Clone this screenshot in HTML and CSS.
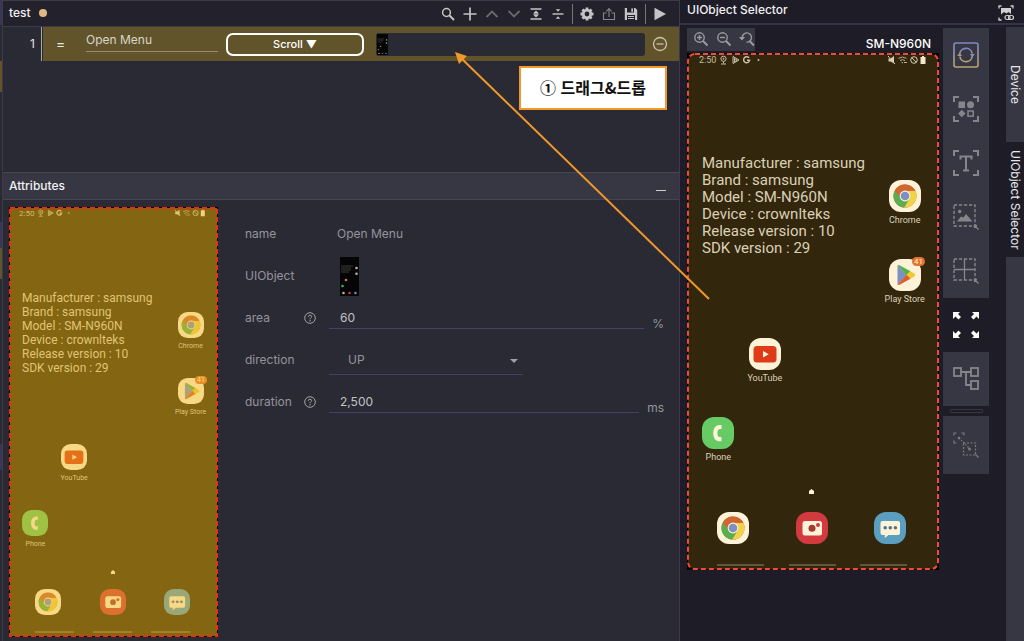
FILE: index.html
```html
<!DOCTYPE html>
<html lang="ko">
<head>
<meta charset="utf-8">
<title>UIObject Selector</title>
<link rel="stylesheet" href="styles.css">
</head>
<body>
<svg class="sprite" aria-hidden="true">
  <symbol id="chrome" viewBox="0 0 32 32">
    <rect width="32" height="32" rx="12" fill="#fff"/>
    <circle cx="16" cy="16" r="11.5" fill="#bc473c"/>
    <path d="M16 16 L5.900 10.400 A11.500 11.500 0 0 0 15.200 27.500 L21 18.800Z" fill="#30ab55"/>
    <path d="M16 10.800 H26.300 A11.500 11.500 0 0 1 15.200 27.500 L20.600 18.600Z" fill="#eed84b"/>
    <path d="M5.900 10.400 A11.500 11.500 0 0 1 26.300 10.800 H16 L11.400 18.600Z" fill="#c4502f"/>
    <circle cx="16" cy="16" r="5.400" fill="#fff"/><circle cx="16" cy="16" r="4.300" fill="#5f83e6"/>
  </symbol>
  <symbol id="play-store" viewBox="0 0 32 32">
    <rect width="32" height="32" rx="12" fill="#fff"/>
    <path d="M8.500 6.500 L17.500 16 L8.500 25.500Z" fill="#5f83e6"/>
    <path d="M8.500 6.500 Q9.500 5.500 11 6.400 L21.500 12.300 L17.500 16.200Z" fill="#30ab55"/>
    <path d="M21.300 12.200 L25.500 14.800 Q27 16 25.500 17.200 L21.300 19.800 L17.300 16Z" fill="#f2ca28"/>
    <path d="M8.500 25.500 Q9.500 26.500 11 25.600 L21.500 19.700 L17.500 15.800Z" fill="#cf472f"/>
  </symbol>
  <symbol id="youtube" viewBox="0 0 32 32">
    <rect width="32" height="32" rx="12" fill="#fff"/>
    <rect x="4.500" y="8" width="23" height="16.500" rx="3.500" fill="#d71a0f"/>
    <path d="M14 13 L19.800 16.200 L14 19.400Z" fill="#fff"/>
  </symbol>
  <symbol id="phone-app" viewBox="0 0 32 32">
    <rect width="32" height="32" rx="12" fill="#41ce70"/>
    <path d="M19.500 10 H17.300 Q13.300 10.600 13.300 16.200 Q13.300 21.600 17.300 22.200 H19.500" fill="none" stroke="#fff" stroke-width="4.200"/>
  </symbol>
  <symbol id="camera" viewBox="0 0 32 32">
    <rect width="32" height="32" rx="12" fill="#c81840"/>
    <rect x="6.500" y="9" width="19.500" height="14.500" rx="2.500" fill="#fff"/>
    <circle cx="16" cy="16.200" r="3.500" fill="#8e1a2c"/><circle cx="22" cy="13" r="2" fill="#c81840"/>
  </symbol>
  <symbol id="messages" viewBox="0 0 32 32">
    <rect width="32" height="32" rx="12" fill="#3395e1"/>
    <path d="M8.500 9 H24 Q26 9 26 11 V21 Q26 23 24 23 H14.500 L10.800 26 V23 H8.500 Q6.500 23 6.500 21 V11 Q6.500 9 8.500 9Z" fill="#fff"/>
    <circle cx="11.200" cy="15.800" r="1.800" fill="#2a5f9c"/><circle cx="16.300" cy="15.800" r="1.800" fill="#2a5f9c"/><circle cx="21.400" cy="15.800" r="1.800" fill="#2a5f9c"/>
  </symbol>
  <symbol id="status-left" viewBox="0 0 42 10">
    <g fill="none" stroke="#bdbdbd"><circle cx="4.500" cy="3.800" r="2.600"/><path d="M4.500 6.500 V8.500 M2 9 H7"/><circle cx="4.500" cy="3.800" r=".6"/>
    <path d="M14 1.500 L20 5 L14 8.500Z"/><path d="M15.500 3.500 V7 L18 5.200Z"/>
    <path d="M30 2.900 A3 3 0 1 0 30.600 5.200 H28" stroke-width="1.500"/></g>
    <circle cx="39.500" cy="5" r="1" fill="#bdbdbd"/>
  </symbol>
  <symbol id="status-right" viewBox="0 0 40 10">
    <path d="M1.500 3.500 H3.500 L7 1 V8.500 L3.500 6.500 H1.500Z" fill="#cfcfcf"/><path d="M1 1 L8 9" stroke="#cfcfcf"/>
    <g fill="none" stroke="#a9a9a9"><path d="M11.500 3.300 Q15.500 .8 19.500 3.300 M13 5.500 Q15.500 3.800 18 5.500 M14.500 7.200 L16 8 M17 7.500 H20"/>
    <circle cx="27" cy="5" r="3.300" stroke="#cfcfcf"/><path d="M24.700 2.700 L29.300 7.300" stroke="#cfcfcf"/></g>
    <path d="M33.500 2 H35 V1 H37 V2 H38.500 V9 H33.500Z" fill="#f0f0f0"/>
  </symbol>
  <symbol id="thumb" viewBox="0 0 19 39">
    <rect width="19" height="39" fill="#050505"/>
    <path d="M1 9 H13 M1 11 H11 M1 13 H11 M1 15 H9" stroke="#3c3c3c"/>
    <g fill="#b5b69a"><circle cx="16.500" cy="11" r="1.300"/><circle cx="16.500" cy="16.800" r="1.300"/><circle cx="3.500" cy="36" r="1.300"/></g>
    <circle cx="6" cy="23" r="1.300" fill="#c27a6c"/><circle cx="2.500" cy="29" r="1.300" fill="#43b256"/>
    <circle cx="9.500" cy="36" r="1.300" fill="#c23b55"/><circle cx="15.500" cy="36" r="1.300" fill="#4a98cc"/>
  </symbol>
  <symbol id="help" viewBox="0 0 12 12">
    <g fill="none" stroke="#a2a2a8"><circle cx="6" cy="6" r="5.300"/><path d="M4.300 4.800 Q4.400 3.200 6 3.200 Q7.700 3.300 7.600 4.700 Q7.500 5.500 6.600 6 Q6 6.400 6 7.300"/></g><circle cx="6" cy="8.800" r=".7" fill="#a2a2a8"/>
  </symbol>
  <symbol id="corners" viewBox="0 0 26 26">
    <path d="M1 6 V1 H6 M20 1 H25 V6 M25 20 V25 H20 M6 25 H1 V20" fill="none" stroke="#85858a" stroke-width="2"/>
  </symbol>
  <symbol id="marquee" viewBox="0 0 26 26">
    <rect x="1" y="1" width="21" height="21" fill="none" stroke="#85858a" stroke-width="1.400" stroke-dasharray="3.200 1.800"/>
    <path d="M21.500 21.500 L25.500 25.500 M21.500 24 V21.500 H24" fill="none" stroke="#85858a" stroke-width="1.300"/>
  </symbol>
</svg>

<div class="app">
  <div class="edge"></div>
  <main class="editor">
    <header class="editor-bar">
      <h1 class="tab-title">test</h1><span class="dirty"></span>
      <div class="actions">
        <button class="act" aria-label="Search"><svg viewBox="0 0 14 14"><circle cx="5.500" cy="5.500" r="3.900" fill="none" stroke="currentColor" stroke-width="1.500"/><path d="M8.500 8.500 L13 13" stroke="currentColor" stroke-width="2"/></svg></button>
        <button class="act" aria-label="Add"><svg viewBox="0 0 14 14"><path d="M7 .5 V13.500 M.5 7 H13.500" stroke="currentColor" stroke-width="1.700"/></svg></button>
        <button class="act dim" aria-label="Up"><svg viewBox="0 0 14 14"><path d="M1.500 10 L7 4.500 L12.500 10" fill="none" stroke="currentColor" stroke-width="1.800"/></svg></button>
        <button class="act dim" aria-label="Down"><svg viewBox="0 0 14 14"><path d="M1.500 4 L7 9.500 L12.500 4" fill="none" stroke="currentColor" stroke-width="1.800"/></svg></button>
        <button class="act" aria-label="Expand"><svg viewBox="0 0 14 14"><path d="M1.500 2 H12.500 M1.500 12 H12.500 M4.500 7 H9.500" stroke="currentColor" stroke-width="1.400"/><path d="M7 3.500 L9.500 6 H4.500Z M7 10.500 L9.500 8 H4.500Z" fill="currentColor"/></svg></button>
        <button class="act" aria-label="Collapse"><svg viewBox="0 0 14 14"><path d="M1.500 7 H12.500" stroke="currentColor" stroke-width="1.400"/><path d="M7 4.800 L9.300 2.200 H4.700Z M7 9.200 L9.300 11.800 H4.700Z" fill="currentColor"/></svg></button>
        <span class="sep"></span>
        <button class="act" aria-label="Settings"><svg viewBox="0 0 14 14"><circle cx="7" cy="7" r="3.800" fill="none" stroke="currentColor" stroke-width="2.800"/><path d="M7 .5 V2.500 M7 11.500 V13.500 M.5 7 H2.500 M11.500 7 H13.500 M2.400 2.400 L3.800 3.800 M10.200 10.200 L11.600 11.600 M2.400 11.600 L3.800 10.200 M10.200 3.800 L11.600 2.400" stroke="currentColor" stroke-width="2.800"/></svg></button>
        <button class="act mid" aria-label="Upload"><svg viewBox="0 0 14 14"><path d="M4.500 6 H1.500 V12.500 H12.500 V6 H9.500 M7 10 V2 M4.300 4.500 L7 1.600 L9.700 4.500" fill="none" stroke="currentColor" stroke-width="1.100"/></svg></button>
        <button class="act" aria-label="Save"><svg viewBox="0 0 14 14"><path fill-rule="evenodd" d="M.8 1 H11.200 L13.200 3 V13 H.8Z M3 1 V5.500 H10 V1Z M3 8 V13 H11 V8Z" fill="currentColor"/><path d="M7.300 1.500 H9 V4.700 H7.300Z M4 9 H10 V10 H4Z M4 11 H10 V12 H4Z" fill="currentColor"/></svg></button>
        <span class="sep"></span>
        <button class="act" aria-label="Run"><svg viewBox="0 0 14 14"><path d="M1.500 .8 L13 7 L1.500 13.200Z" fill="currentColor"/></svg></button>
      </div>
    </header>

    <section class="steps">
      <div class="step">
        <span class="line-no">1</span>
        <div class="step-body">
          <span class="grip">=</span>
          <input class="step-name" aria-label="Step name" value="Open Menu">
          <button class="kind">Scroll ▼</button>
          <div class="drop"><svg class="drop-thumb" viewBox="0 0 19 39" preserveAspectRatio="none"><use href="#thumb"/></svg></div>
          <button class="remove" aria-label="Remove"><svg viewBox="0 0 16 16"><g fill="none" stroke="#c9c3b0" stroke-width="1.300"><circle cx="8" cy="8" r="6.500"/><path d="M4.500 8 H11.500"/></g></svg></button>
        </div>
      </div>
    </section>

    <header class="attr-bar"><h2 class="attr-title">Attributes</h2><button class="minimize" aria-label="Minimize"></button></header>

    <section class="attrs">
      <div class="phone small">
        <div class="status"><span class="clock">2:50</span><svg class="st-left"><use href="#status-left"/></svg><svg class="st-right"><use href="#status-right"/></svg></div>
        <div class="home">
          <div class="info">Manufacturer : samsung<br>Brand : samsung<br>Model : SM-N960N<br>Device : crownlteks<br>Release version : 10<br>SDK version : 29</div>
          <div class="launcher r1 c5"><svg class="ico"><use href="#chrome"/></svg><span>Chrome</span></div>
          <div class="launcher r2 c5"><svg class="ico"><use href="#play-store"/></svg><span>Play Store</span><b class="badge">41</b></div>
          <div class="launcher r3 c2"><svg class="ico"><use href="#youtube"/></svg><span>YouTube</span></div>
          <div class="launcher r4 c1"><svg class="ico"><use href="#phone-app"/></svg><span>Phone</span></div>
        </div>
        <svg class="pager" viewBox="0 0 6 6"><path d="M3 0 L6 2.500 V6 H0 V2.500Z" fill="#fff"/></svg>
        <div class="dock"><svg class="ico"><use href="#chrome"/></svg><svg class="ico"><use href="#camera"/></svg><svg class="ico"><use href="#messages"/></svg></div>
        <div class="nav"><i></i><i></i><i></i></div>
        <svg class="outline"><rect/></svg>
      </div>

      <form class="form">
        <div class="field"><span class="label">name</span><span class="static">Open Menu</span></div>
        <div class="field"><span class="label">UIObject</span><svg class="obj-thumb"><use href="#thumb"/></svg></div>
        <div class="field"><label class="label" for="area">area</label><svg class="help"><use href="#help"/></svg><input class="box" id="area" value="60"><span class="unit">%</span></div>
        <div class="field"><label class="label" for="direction">direction</label><div class="pick"><select class="select" id="direction"><option>UP</option><option>DOWN</option></select></div></div>
        <div class="field"><label class="label" for="duration">duration</label><svg class="help"><use href="#help"/></svg><input class="box" id="duration" value="2,500"><span class="unit">ms</span></div>
      </form>
    </section>
  </main>

  <aside class="selector">
    <header class="sel-bar"><h2 class="sel-title">UIObject Selector</h2>
      <button class="link-btn" aria-label="Link screen"><svg viewBox="0 0 16 16"><path d="M1 3.500 V1 H3.500 M12.500 1 H15 V3.500 M1 12.500 V15 H3.500" fill="none" stroke="#cfcfcf" stroke-width="1.300"/><path d="M3 3 H13 V9 L10.500 7 L8.500 8.500 L6 7 L3 9.500Z" fill="#cfcfcf"/><rect x="7" y="10.500" width="5" height="4" rx="2" fill="none" stroke="#cfcfcf" stroke-width="1.200"/><rect x="10.500" y="10.500" width="5" height="4" rx="2" fill="none" stroke="#cfcfcf" stroke-width="1.200"/></svg></button>
    </header>
    <div class="sel-body">
      <div class="stage">
        <div class="stage-head">
          <div class="zoom">
            <button class="zoom-btn" aria-label="Zoom in"><svg viewBox="0 0 16 16"><g fill="none" stroke="#9a9aa0" stroke-width="1.400"><circle cx="6.500" cy="6.500" r="4.700"/><path d="M6.500 4 V9 M4 6.500 H9"/></g><path d="M10 10 L14.500 14.500" stroke="#9a9aa0" stroke-width="2"/></svg></button>
            <button class="zoom-btn" aria-label="Zoom out"><svg viewBox="0 0 16 16"><g fill="none" stroke="#9a9aa0" stroke-width="1.400"><circle cx="6.500" cy="6.500" r="4.700"/><path d="M4 6.500 H9"/></g><path d="M10 10 L14.500 14.500" stroke="#9a9aa0" stroke-width="2"/></svg></button>
            <button class="zoom-btn" aria-label="Reset zoom"><svg viewBox="0 0 16 16"><path d="M3.300 7 A4.600 4.600 0 1 1 7.500 11.100" fill="none" stroke="#9a9aa0" stroke-width="1.400"/><path d="M0 6 L6 6 L3 9.500Z" fill="#9a9aa0"/><path d="M10.500 10 L15 14.500" stroke="#9a9aa0" stroke-width="2"/></svg></button>
          </div>
          <span class="model">SM-N960N</span>
        </div>
        <div class="phone large">
          <div class="status"><span class="clock">2:50</span><svg class="st-left"><use href="#status-left"/></svg><svg class="st-right"><use href="#status-right"/></svg></div>
          <div class="home">
            <div class="info">Manufacturer : samsung<br>Brand : samsung<br>Model : SM-N960N<br>Device : crownlteks<br>Release version : 10<br>SDK version : 29</div>
            <div class="launcher r1 c5"><svg class="ico"><use href="#chrome"/></svg><span>Chrome</span></div>
            <div class="launcher r2 c5"><svg class="ico"><use href="#play-store"/></svg><span>Play Store</span><b class="badge">41</b></div>
            <div class="launcher r3 c2"><svg class="ico"><use href="#youtube"/></svg><span>YouTube</span></div>
            <div class="launcher r4 c1"><svg class="ico"><use href="#phone-app"/></svg><span>Phone</span></div>
          </div>
          <svg class="pager" viewBox="0 0 6 6"><path d="M3 0 L6 2.500 V6 H0 V2.500Z" fill="#fff"/></svg>
          <div class="dock"><svg class="ico"><use href="#chrome"/></svg><svg class="ico"><use href="#camera"/></svg><svg class="ico"><use href="#messages"/></svg></div>
          <div class="nav"><i></i><i></i><i></i></div>
          <svg class="outline"><rect/></svg>
        </div>
      </div>

      <div class="tools">
        <div class="tool-group">
          <button class="tool" aria-label="Refresh"><svg viewBox="0 0 26 26"><defs><linearGradient id="tone" x1="0" y1="0" x2="0" y2="1"><stop offset="0" stop-color="#8088c4"/><stop offset=".5" stop-color="#9c98a0"/><stop offset="1" stop-color="#b9a66a"/></linearGradient></defs><g fill="none" stroke="url(#tone)" stroke-width="1.600"><rect x="1" y="1" width="24" height="24" rx="2"/><path d="M6.700 12.500 A6.300 6.300 0 0 1 19.200 11.500 M19.300 13.500 A6.300 6.300 0 0 1 6.800 14.500"/></g><path d="M16.800 12 H22 L19.400 15Z" fill="#8a8cb8"/><path d="M4 14 H9.200 L6.600 11Z" fill="#a59a7c"/></svg></button>
          <button class="tool" aria-label="Objects"><svg viewBox="0 0 26 26"><use href="#corners"/><g fill="#85858a"><rect x="5.500" y="5.500" width="6.500" height="6.500"/><circle cx="17.500" cy="8.800" r="3.500"/><path d="M8.800 13.800 L12.500 17.500 L8.800 21.200 L5.100 17.500Z"/></g><rect x="15" y="15" width="5.200" height="5.200" fill="none" stroke="#85858a" stroke-width="1.500"/></svg></button>
          <button class="tool" aria-label="Text"><svg viewBox="0 0 26 26"><use href="#corners"/><path d="M7.500 9.500 V6.500 H18.500 V9.500 M13 6.500 V20.500 M10 20.500 H16" fill="none" stroke="#85858a" stroke-width="2"/></svg></button>
          <button class="tool" aria-label="Image"><svg viewBox="0 0 26 26"><use href="#marquee"/><circle cx="6.700" cy="7.500" r="1.700" fill="#85858a"/><path d="M4 17.500 L8 12.500 L10.500 13.500 L13 10 L19.500 17.500Z" fill="#85858a"/></svg></button>
          <button class="tool" aria-label="Area"><svg viewBox="0 0 26 26"><use href="#marquee"/><path d="M11.500 1 V22 M1 11.500 H22" stroke="#85858a" stroke-width="1.300"/></svg></button>
        </div>
        <button class="tool bare" aria-label="Full size"><svg viewBox="0 0 26 26"><path d="M0 0 H7 L5 2 L8 5 L5.500 7.500 L2.500 4.500 L0 7Z M26 0 V7 L23.500 4.500 L20.500 7.500 L18 5 L21 2 L19 0Z M0 26 V19 L2.500 21.500 L5.500 18.500 L8 21 L5 24 L7 26Z M26 26 H19 L21 24 L18 21 L20.500 18.500 L23.500 21.500 L26 19Z" fill="#fff"/></svg></button>
        <div class="tool-group"><button class="tool" aria-label="Tree"><svg viewBox="0 0 26 26"><g fill="none" stroke="#85858a" stroke-width="1.800"><rect x="1" y="2" width="7" height="8"/><rect x="18" y="2" width="7" height="8"/><rect x="18" y="15" width="7" height="8"/><path d="M8 6 H18 M13 6 V19 H18"/></g></svg></button></div>
        <hr class="rule">
        <div class="tool-group"><button class="tool tall" aria-label="Drag area"><svg viewBox="0 0 26 26"><g fill="none" stroke="#7a7a80" stroke-width="1.200"><path d="M1 3.500 V1 H3.500 M8.500 1 H11 V3.500 M1 8.500 V11 H3.500"/><rect x="10.500" y="11" width="12" height="12" stroke-dasharray="2 1.500"/><path d="M6 6 L16.500 16.500" stroke-dasharray="1.500 1.500"/><path d="M22.500 22.500 L25.500 25.500"/></g><circle cx="6" cy="6" r="1.300" fill="#7a7a80"/><circle cx="16.500" cy="17" r="1.500" fill="#7a7a80"/></svg></button></div>
      </div>

      <nav class="side-tabs"><button class="side-tab">Device</button><button class="side-tab active">UIObject Selector</button><div class="side-fill"></div></nav>
    </div>
  </aside>

  <svg class="arrow" viewBox="0 0 256 250"><path d="M254 247 L7 7" stroke="#f0982a" stroke-width="2"/><path d="M0 0 L12 4 L4 12Z" fill="#f0982a"/></svg>
  <div class="callout">① 드래그&amp;드롭</div>
</div>
</body>
</html>
```

FILE: styles.css
```css
* { box-sizing: border-box; }
body { margin: 0; background: #1e1c26; color: #e6e6e8; font: 12px/16px Inter, "Noto Sans CJK KR", sans-serif; }
button, input, select { font: inherit; color: inherit; background: none; border: 0; padding: 0; margin: 0; border-radius: 0; outline: 0; }
h1, h2 { margin: 0; font-size: 12px; font-weight: 500; color: #f0f0f2; }
svg { display: block; }
.sprite { position: absolute; width: 0; height: 0; }

.app { position: relative; display: flex; min-height: 100vh; }
.edge { width: 3px; border-right: 1px solid #3d3b4a; background: linear-gradient(#3b3658 0 25px, #2a2a35 25px 61px, #62542a 61px 92px, #2a2a35 92px 222px, #3b3658 222px 248px, #62542a 248px 279px, #2a2a35 279px 444px, #3b3658 444px 470px, #2a2a35 470px); }
.editor { flex: 1; min-width: 0; display: flex; flex-direction: column; background: #2a2a35; border-right: 1px solid #3d3b4a; }

.editor-bar { display: flex; align-items: center; height: 27px; padding: 0 0 1px 6px; background: #22212c; border-top: 1px solid #3d3b4a; border-bottom: 1px solid #3d3b4a; }
.dirty { width: 8px; height: 8px; margin-left: 8px; border-radius: 50%; background: #e0b884; }
.actions { display: flex; align-items: center; margin-left: auto; padding: 2px 8px 0 0; }
.act { width: 22px; padding: 0 4px; color: #c4c4c6; }
.act svg { width: 14px; height: 14px; }
.act.dim { color: #6a6970; }
.act.mid { color: #85858c; }
.sep { width: 1px; height: 20px; margin: 0 3px; background: #77767e; }

.steps { height: 145px; }
.step { display: flex; height: 34px; }
.line-no { width: 39px; padding-right: 6px; line-height: 34px; text-align: right; border-right: 1px solid #a9a9ae; }
.step-body { flex: 1; display: flex; align-items: center; margin-left: 1px; padding: 0 11px 0 13px; background: #62542a; }
.grip { width: 30px; font-size: 14px; }
.step-name { width: 132px; height: 22px; margin-bottom: 6px; padding-bottom: 2px; color: #d8d5cc; border-bottom: 1px solid #968c70; }
.kind { width: 138px; height: 23px; margin: 0 12px 0 8px; font-size: 11px; font-weight: 500; color: #fff; border: 2px solid #fff; border-radius: 7px; }
.drop { flex: 1; height: 23px; padding: 1px; background: #2a2a35; border-radius: 3px; }
.drop-thumb { width: 11px; height: 21px; }
.remove { margin-left: 7px; }
.remove svg { width: 16px; height: 16px; }

.attr-bar { display: flex; justify-content: space-between; height: 28px; padding: 5px 13px 0 6px; background: #373643; border-top: 1px solid #464453; border-bottom: 1px solid #464453; }
.minimize { width: 10px; height: 13px; border-bottom: 1px solid #d0d0d2; }
.attrs { flex: 1; display: flex; padding: 7px 15px 4px 6px; }
.form { flex: 1; margin-left: 27px; padding-top: 6px; color: #94949a; }
.field { display: flex; align-items: center; height: 42px; }
.label { width: 59px; margin-right: 25px; }
.static { padding-left: 8px; }
.obj-thumb { width: 19px; height: 39px; margin-left: 11px; }
.help { width: 12px; height: 12px; margin: 0 13px 0 -25px; }
.box { flex: 1; min-width: 0; height: 21px; padding: 0 11px; color: #c2c2c6; border-bottom: 1px solid #44406a; }
.unit { margin: 12px 0 0 8px; }
.pick { position: relative; width: 194px; }
.pick::after { content: ""; position: absolute; right: 5px; top: 13px; border: 4px solid transparent; border-top-color: #a0a0a6; border-bottom: 0; pointer-events: none; }
.select { width: 100%; height: 29px; padding-left: 19px; appearance: none; border-bottom: 1px solid #44406a; }

.phone { position: relative; display: flex; flex-direction: column; background: #000; color: #d4d4d4; font-family: Roboto, sans-serif; }
.phone.large { width: 252px; height: 517px; --icon: 32px; --row: 79px; --lift: 25px; --start: 102px; --label: 9px; --text: 15px; --lead: 17px; --pad: 30px; --bar: 47px; --gap: 18px; }
.phone.small { width: 209px; height: 430px; --icon: 26px; --row: 66px; --lift: 21px; --start: 84px; --label: 7px; --text: 12px; --lead: 14px; --pad: 26px; --bar: 39px; --gap: 15px; }
.status { display: flex; flex: none; height: var(--start); padding: 2px 12px 0 12px; font-size: 9px; line-height: 11px; color: #bdbdbd; }
.small .status { padding-left: 10px; font-size: 8px; line-height: 9px; }
.st-left { width: 42px; height: 10px; margin-left: 3px; }
.st-right { width: 40px; height: 10px; margin-left: auto; }
.small .st-left { width: 34px; height: 8px; }
.small .st-right { width: 32px; height: 8px; }
.home { flex: none; display: grid; grid-template: repeat(4, var(--row)) / repeat(5, minmax(0, 1fr)); padding: 0 11px 0 8px; }
.small .home { padding: 0 8px 0 7px; }
.info { grid-area: 1 / 1 / 3 / 5; padding-left: 7px; font-size: var(--text); line-height: var(--lead); white-space: nowrap; }
.small .info { padding-left: 6px; }
.launcher { position: relative; display: flex; flex-direction: column; align-items: center; gap: 2px; padding-top: var(--lift); font-size: var(--label); line-height: 12px; white-space: nowrap; }
.r1 { grid-row: 1; } .r2 { grid-row: 2; } .r3 { grid-row: 3; } .r4 { grid-row: 4; }
.c1 { grid-column: 1; } .c2 { grid-column: 2; } .c5 { grid-column: 5; }
.ico { width: var(--icon); height: var(--icon); flex: none; }
.badge { position: absolute; right: 3px; top: calc(var(--lift) - 2px); padding: 0 2px; font-size: 8px; font-weight: 400; line-height: 9px; border-radius: 5px; background: #e0602c; color: #fff; }
.small .badge { font-size: 7px; line-height: 8px; }
.pager { flex: none; width: 5px; height: 5px; margin: var(--gap) 0 var(--gap) 122px; }
.small .pager { width: 4px; height: 4px; margin-left: 102px; }
.dock { display: flex; justify-content: space-between; padding: 0 calc(var(--pad) + 3px) 0 var(--pad); }
.small .dock { padding-right: 28px; }
.nav { display: flex; justify-content: space-between; margin: auto calc(var(--pad) + 2px) 4px var(--pad); }
.nav i { width: var(--bar); height: 2px; background: #3c3c3c; }
.outline { position: absolute; inset: 0; width: 100%; height: 100%; }
.outline rect { x: 1px; y: 1px; width: calc(100% - 2px); height: calc(100% - 2px); fill: #fbc33c; fill-opacity: 0.2; stroke: #f4483a; stroke-width: 2; stroke-dasharray: 5 3; rx: 7px; }
.small .outline rect { fill: #eeb821; fill-opacity: 0.55; stroke: #ee2e12; rx: 0; }
.small .outline { background: #a3421499; background: none; }

.selector { flex: none; width: 344px; display: flex; flex-direction: column; }
.sel-bar { display: flex; justify-content: space-between; height: 25px; padding: 2px 10px 0 7px; border-bottom: 2px solid #35334a; }
.link-btn svg { width: 16px; height: 16px; }
.sel-body { flex: 1; display: flex; }
.stage { flex: 1; padding: 3px 4px 0 7px; }
.stage-head { display: flex; justify-content: space-between; height: 25px; padding-right: 8px; }
.zoom { display: flex; gap: 7px; height: 23px; padding: 3px 0 0 6px; background: #373643; }
.zoom-btn { width: 16px; height: 16px; }
.zoom-btn svg { width: 16px; height: 16px; }
.model { padding-top: 8px; font-weight: 500; color: #fff; }
.tools { width: 46px; padding-top: 3px; }
.tool-group { background: #373643; }
.tool { display: flex; justify-content: center; align-items: center; width: 100%; height: 54px; }
.tool.tall { height: 58px; }
.tool svg { width: 26px; height: 26px; }
.rule { width: 33px; height: 4px; margin: 3px auto; border: 1px solid #373643; border-radius: 1px; }
.side-tabs { width: 18px; margin-left: 17px; padding-top: 2px; display: flex; flex-direction: column; }
.side-tab { height: 115px; writing-mode: vertical-rl; text-align: center; line-height: 18px; background: #373643; }
.side-tab.active { background: none; }
.side-fill { flex: 1; background: #373643; }

.arrow { position: absolute; right: 313px; top: 52px; width: 256px; height: 250px; pointer-events: none; }
.callout { position: absolute; right: 357px; top: 66px; width: 148px; height: 44px; border: 2px solid #f0982a; background: #fff; color: #111; font: 700 16px/39px "Noto Sans CJK KR", sans-serif; text-align: center; }
```
